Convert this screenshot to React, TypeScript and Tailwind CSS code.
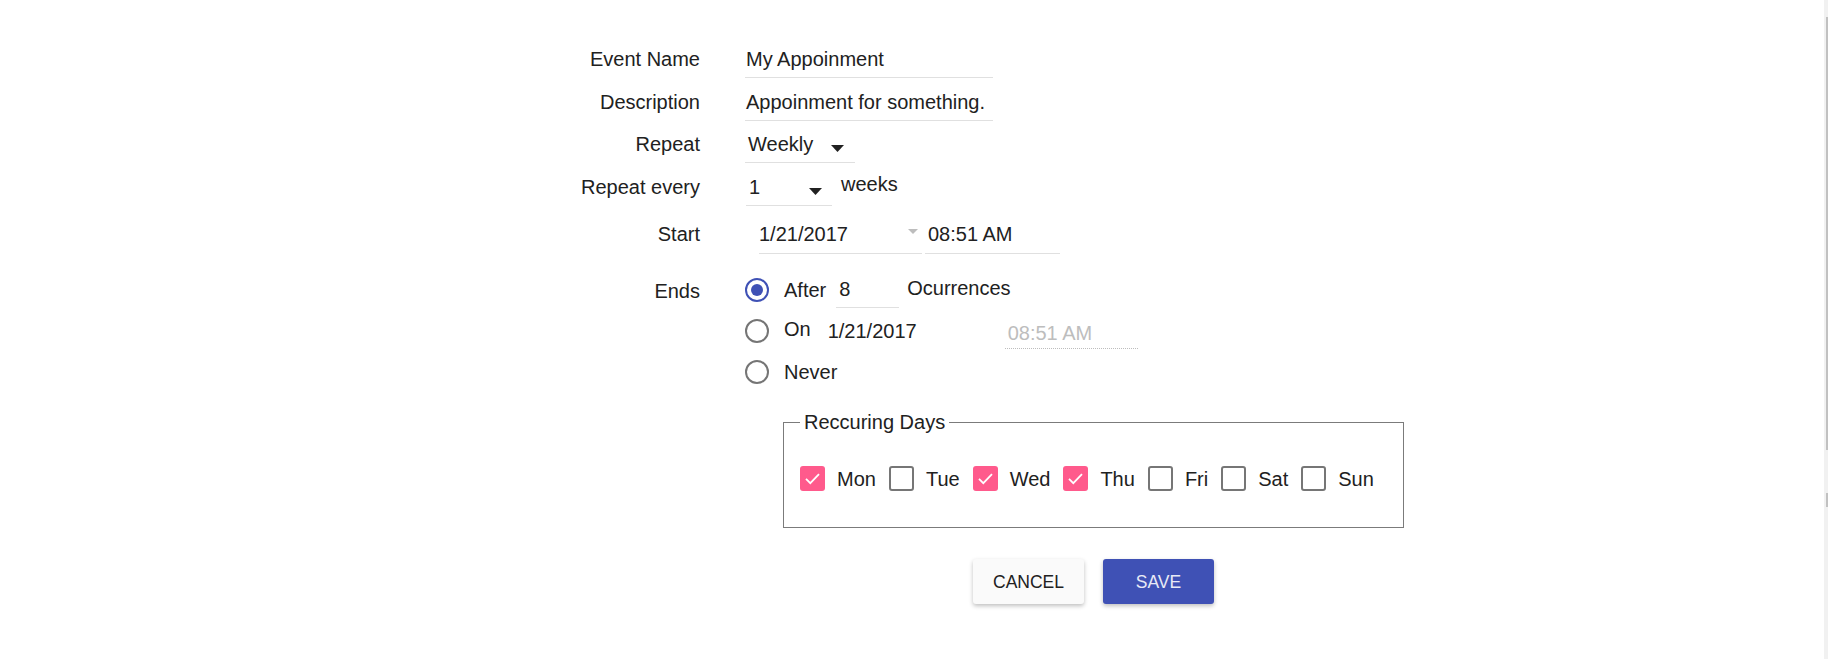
import React from "react";

const days = [
  { name: "Mon", checked: true },
  { name: "Tue", checked: false },
  { name: "Wed", checked: true },
  { name: "Thu", checked: true },
  { name: "Fri", checked: false },
  { name: "Sat", checked: false },
  { name: "Sun", checked: false },
];

function Caret({ className = "" }: { className?: string }) {
  return (
    <svg width="13" height="7" viewBox="0 0 13 7" className={className}>
      <path d="M0 0h13L6.5 7z" fill="#212121" />
    </svg>
  );
}

function Label({ children }: { children: React.ReactNode }) {
  return (
    <div className="mr-[45px] w-[140px] shrink-0 text-right text-[20px] leading-[24px]">
      {children}
    </div>
  );
}

function Radio({ checked = false }: { checked?: boolean }) {
  return (
    <span
      className={
        checked
          ? "flex h-[24px] w-[24px] shrink-0 items-center justify-center rounded-full border-2 border-[#3f51b5]"
          : "flex h-[24px] w-[24px] shrink-0 items-center justify-center rounded-full border-2 border-[#757575]"
      }
    >
      {checked && <span className="h-[12px] w-[12px] rounded-full bg-[#3f51b5]" />}
    </span>
  );
}

function DayBox({ checked }: { checked: boolean }) {
  if (checked) {
    return (
      <span className="flex h-[25px] w-[25px] shrink-0 items-center justify-center rounded-[3px] bg-[#ff5a8c]">
        <svg width="25" height="25" viewBox="0 0 25 25">
          <path d="M6 12.8l4.3 4.4 8.7-9" fill="none" stroke="#fff" strokeWidth="1.8" />
        </svg>
      </span>
    );
  }
  return <span className="h-[25px] w-[25px] shrink-0 rounded-[3px] border-2 border-[#767676]" />;
}

export default function App() {
  return (
    <div className="flex h-[659px] w-full overflow-hidden bg-white font-['Liberation_Sans',Arial,sans-serif] text-[#212121]">
      <main className="flex-1 pl-[560px] pt-[44px] text-[20px] leading-[24px]">
        <div className="flex items-baseline">
          <Label>Event Name</Label>
          <div className="w-[248px] border-b border-[#e0e0e0] pb-[6px] pl-[1px] pt-[3px]">My Appoinment</div>
        </div>

        <div className="mt-[9px] flex items-baseline">
          <Label>Description</Label>
          <div className="w-[248px] border-b border-[#e0e0e0] pb-[6px] pl-[1px] pt-[3px]">
            Appoinment for something.
          </div>
        </div>

        <div className="mt-[8px] flex items-baseline">
          <Label>Repeat</Label>
          <div className="flex w-[110px] items-start justify-between border-b border-[#e0e0e0] pb-[6px] pl-[3px] pr-[11px] pt-[3px]">
            <span>Weekly</span>
            <Caret className="mt-[13px]" />
          </div>
        </div>

        <div className="mt-[9px] flex items-baseline">
          <Label>Repeat every</Label>
          <div className="flex items-start">
            <div className="ml-[1px] flex w-[86px] items-start justify-between border-b border-[#e0e0e0] pb-[6px] pl-[3px] pr-[10px] pt-[3px]">
              <span>1</span>
              <Caret className="mt-[13px]" />
            </div>
            <span className="ml-[9px]">weeks</span>
          </div>
        </div>

        <div className="mt-[13px] flex items-baseline">
          <Label>Start</Label>
          <div className="flex">
            <div className="ml-[14px] flex w-[163px] items-start justify-between border-b border-[#e0e0e0] pb-[7px] pr-[4px] pt-[3px]">
              <span>1/21/2017</span>
              <svg width="10" height="5" viewBox="0 0 10 5" className="mt-[7px]">
                <path d="M0 0h10L5 5z" fill="#bdbdbd" />
              </svg>
            </div>
            <div className="ml-[3px] w-[135px] border-b border-[#e0e0e0] pb-[7px] pl-[3px] pt-[3px]">08:51 AM</div>
          </div>
        </div>

        <div className="mt-[15px] flex">
          <div className="mr-[45px] flex h-[41px] w-[140px] shrink-0 items-center justify-end pt-[3px]">
            Ends
          </div>
          <div className="flex flex-col">
            <div className="flex h-[41px] items-center">
              <Radio checked />
              <span className="ml-[15px]">After</span>
              <div className="ml-[10px] w-[63px] border-b border-[#e0e0e0] pb-[6px] pl-[3px] pt-[5px]">8</div>
              <span className="mb-[4px] ml-[8px]">Ocurrences</span>
            </div>
            <div className="flex h-[41px] items-center">
              <Radio />
              <span className="mb-[3px] ml-[15px]">On</span>
              <span className="ml-[17px] w-[177px]">1/21/2017</span>
              <div className="w-[133px] border-b border-dotted border-[#bdbdbd] pb-[3px] pl-[3px] pt-[8px] text-[#bdbdbd]">
                08:51 AM
              </div>
            </div>
            <div className="flex h-[41px] items-center">
              <Radio />
              <span className="ml-[15px]">Never</span>
            </div>

            <div className="ml-[38px] mt-[19px] w-[619px]">
              <fieldset className="border border-[#7b7b7b] px-[16px] pb-[36px] pt-[32px]">
                <legend className="px-[4px] leading-[23px]">Reccuring Days</legend>
                <div className="flex h-[25px] items-center">
                  {days.map((day) => (
                    <label key={day.name} className="mr-[13px] flex items-center">
                      <DayBox checked={day.checked} />
                      <span className="ml-[12px]">{day.name}</span>
                    </label>
                  ))}
                </div>
              </fieldset>

              <div className="mt-[31px] flex justify-center gap-[19px] pl-[2px]">
                <button className="h-[45px] w-[111px] rounded-[3px] bg-[#fafafa] text-[17.5px] text-[#212121] shadow-[0_2px_4px_rgba(0,0,0,0.25)]">
                  CANCEL
                </button>
                <button className="h-[45px] w-[111px] rounded-[3px] bg-[#3f51b5] text-[17.5px] text-[#e8eaf6] shadow-[0_2px_4px_rgba(0,0,0,0.25)]">
                  SAVE
                </button>
              </div>
            </div>
          </div>
        </div>
      </main>

      <div className="flex w-[4px] shrink-0 flex-col bg-[#f1f1f1]">
        <div className="ml-[2px] mt-[17px] h-[433px] w-[2px] bg-[#c1c1c1]" />
        <div className="ml-[2px] mt-[43px] h-[14px] w-[2px] bg-[#c1c1c1]" />
      </div>
    </div>
  );
}
